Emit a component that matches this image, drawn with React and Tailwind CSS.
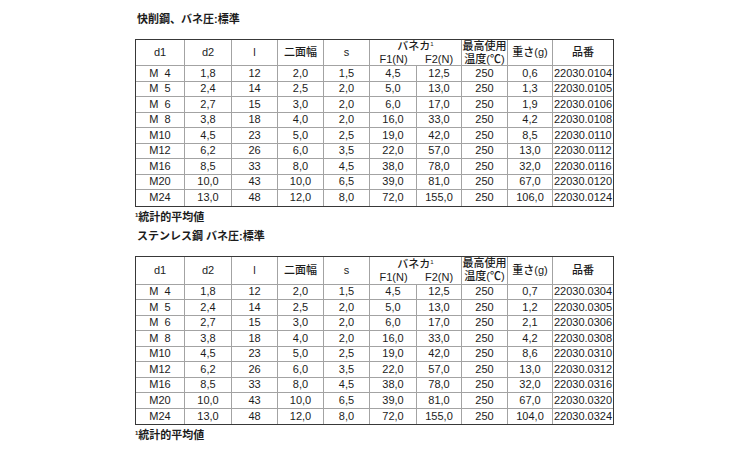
import React from 'react';

const cols = ['w-[49px]', 'w-[47px]', 'w-[46px]', 'w-[46px]', 'w-[46px]', 'w-[47px]', 'w-[45px]', 'w-[46px]', 'w-[45px]', 'w-[60px]'];

const sizes = ['M\u00a0\u00a04', 'M\u00a0\u00a05', 'M\u00a0\u00a06', 'M\u00a0\u00a08', 'M10', 'M12', 'M16', 'M20', 'M24'];
const base = [
  ['1,8', '12', '2,0', '1,5', '4,5', '12,5', '250'],
  ['2,4', '14', '2,5', '2,0', '5,0', '13,0', '250'],
  ['2,7', '15', '3,0', '2,0', '6,0', '17,0', '250'],
  ['3,8', '18', '4,0', '2,0', '16,0', '33,0', '250'],
  ['4,5', '23', '5,0', '2,5', '19,0', '42,0', '250'],
  ['6,2', '26', '6,0', '3,5', '22,0', '57,0', '250'],
  ['8,5', '33', '8,0', '4,5', '38,0', '78,0', '250'],
  ['10,0', '43', '10,0', '6,5', '39,0', '81,0', '250'],
  ['13,0', '48', '12,0', '8,0', '72,0', '155,0', '250'],
];

const tables = [
  {
    title: '快削鋼、バネ圧:標準',
    weights: ['0,6', '1,3', '1,9', '4,2', '8,5', '13,0', '32,0', '67,0', '106,0'],
    codes: ['0104', '0105', '0106', '0108', '0110', '0112', '0116', '0120', '0124'],
    head: 'grid-rows-[13px_13px]',
  },
  {
    title: 'ステンレス鋼 バネ圧:標準',
    weights: ['0,7', '1,2', '2,1', '4,2', '8,6', '13,0', '32,0', '67,0', '104,0'],
    codes: ['0304', '0305', '0306', '0308', '0310', '0312', '0316', '0320', '0324'],
    head: 'grid-rows-[14px_14px]',
  },
];

const Sup = () => <span className="relative -top-[4px] text-[6px] leading-none">1</span>;

const HeadCell = ({ className, children }) => (
  <div className={`row-span-2 flex flex-col items-center justify-center border-r border-b border-[#a3a3a3] text-center leading-[13px] ${className}`}>
    {children}
  </div>
);

const SpecTable = ({ t }) => (
  <div className="w-[479px] border border-[#383838]">
    <div className={`grid grid-cols-[49px_47px_46px_46px_46px_47px_45px_46px_45px_60px] ${t.head}`}>
      <HeadCell>d1</HeadCell>
      <HeadCell>d2</HeadCell>
      <HeadCell>l</HeadCell>
      <HeadCell className="font-medium">二面幅</HeadCell>
      <HeadCell>s</HeadCell>
      <div className="col-span-2 flex items-end justify-center border-r border-[#a3a3a3] leading-[13px]">
        <span className="font-medium">バネカ<Sup /></span>
      </div>
      <HeadCell className="col-start-8 row-start-1 font-medium">
        <span>最高使用</span>
        <span>温度(℃)</span>
      </HeadCell>
      <HeadCell className="col-start-9 row-start-1 font-medium">重さ(g)</HeadCell>
      <HeadCell className="col-start-10 row-start-1 border-r-0 font-medium">品番</HeadCell>
      <div className="col-start-6 row-start-2 flex items-start justify-center border-b border-[#a3a3a3] leading-[13px]">F1(N)</div>
      <div className="col-start-7 row-start-2 flex items-start justify-center border-r border-b border-[#a3a3a3] leading-[13px]">F2(N)</div>
    </div>
    {sizes.map((m, i) => {
      const cells = [m, ...base[i], t.weights[i], `22030.${t.codes[i]}`];
      return (
        <div key={m} className={`flex h-[15.5px] ${i < 8 ? 'border-b border-[#a3a3a3]' : ''}`}>
          {cells.map((c, j) => (
            <div key={j} className={`${cols[j]} flex items-center justify-center leading-none ${j < 9 ? 'border-r border-[#a3a3a3]' : ''}`}>
              {c}
            </div>
          ))}
        </div>
      );
    })}
  </div>
);

export default function App() {
  return (
    <div className="h-[450px] w-[750px] bg-white pl-[135px] pt-[12px] font-['Liberation_Sans','Noto_Sans_CJK_JP',sans-serif] text-[11px] text-[#1c1c1c]">
      {tables.map((t, k) => (
        <div key={k} className={k === 1 ? 'mt-[5px]' : ''}>
          <div className="pl-[2px] text-[11px] font-bold leading-[14px]">{t.title}</div>
          <div className="mt-[13px]">
            <SpecTable t={t} />
          </div>
          <div className="mt-[3px] text-[11px] font-bold leading-[14px]">
            <Sup />統計的平均値
          </div>
        </div>
      ))}
    </div>
  );
}
